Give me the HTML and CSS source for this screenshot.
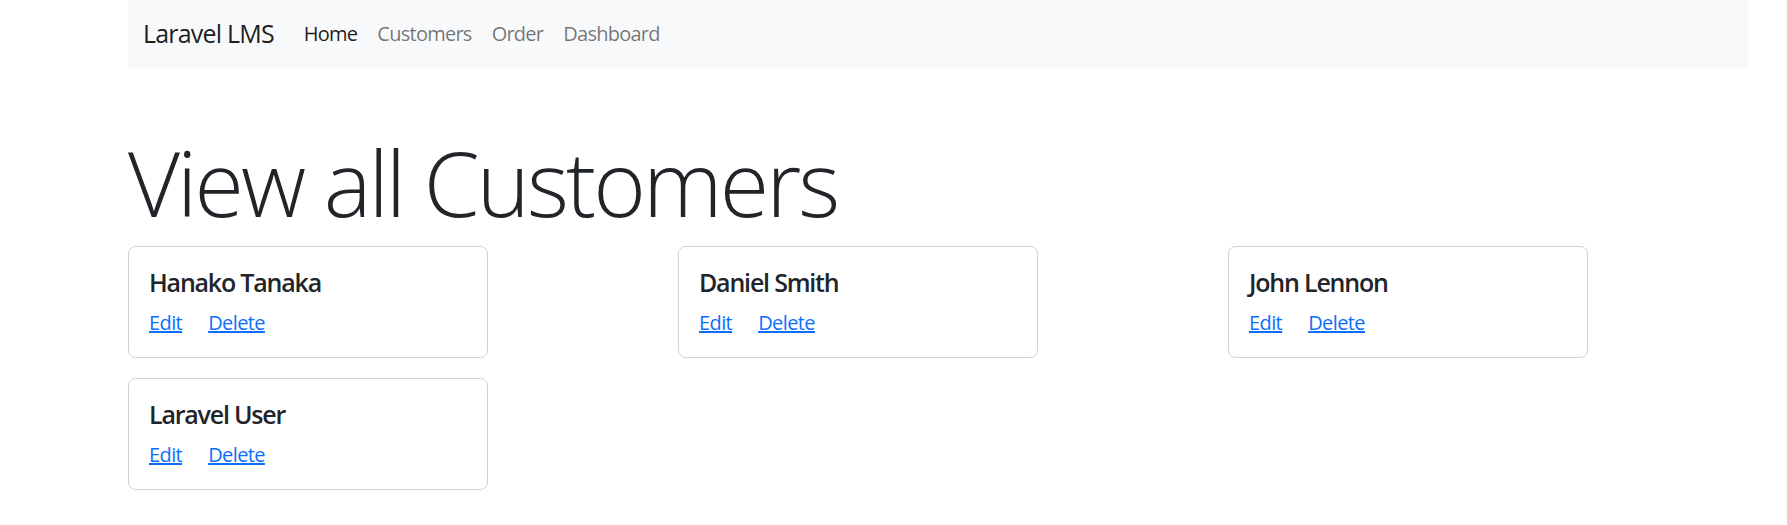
FILE: index.html
```html
<!DOCTYPE html>
<html lang="en">
<head>
<meta charset="utf-8">
<title>Laravel LMS</title>
<link rel="stylesheet" href="styles.css">
</head>
<body>
<div class="container">
  <nav class="navbar">
    <a class="brand" href="#">Laravel LMS</a>
    <ul class="nav">
      <li><a class="nav-link active" href="#">Home</a></li>
      <li><a class="nav-link" href="#">Customers</a></li>
      <li><a class="nav-link" href="#">Order</a></li>
      <li><a class="nav-link" href="#">Dashboard</a></li>
    </ul>
  </nav>
  <main class="main">
    <h1 class="display">View all Customers</h1>
    <div class="grid">
      <div class="card">
        <h5 class="card-title">Hanako Tanaka</h5>
        <div class="links"><a class="card-link" href="#">Edit</a><a class="card-link" href="#">Delete</a></div>
      </div>
      <div class="card">
        <h5 class="card-title">Daniel Smith</h5>
        <div class="links"><a class="card-link" href="#">Edit</a><a class="card-link" href="#">Delete</a></div>
      </div>
      <div class="card">
        <h5 class="card-title">John Lennon</h5>
        <div class="links"><a class="card-link" href="#">Edit</a><a class="card-link" href="#">Delete</a></div>
      </div>
      <div class="card">
        <h5 class="card-title">Laravel User</h5>
        <div class="links"><a class="card-link" href="#">Edit</a><a class="card-link" href="#">Delete</a></div>
      </div>
    </div>
  </main>
</div>
</body>
</html>
```

FILE: styles.css
```css
* { box-sizing: border-box; }
html, body { margin: 0; padding: 0; background: #fff; }
body {
  font-family: "Open Sans", "Noto Sans", "Liberation Sans", sans-serif;
  color: #212529;
  font-size: 20px;
  line-height: 1.5;
}
.container {
  width: 1650px;
  margin-left: 113px;
  padding: 0 15px;
}
.navbar {
  display: flex;
  align-items: center;
  height: 68px;
  padding: 0 15px;
  background: #f8f9fa;
}
.brand {
  font-size: 25px;
  line-height: 37.5px;
  letter-spacing: -0.8px;
  color: rgba(0, 0, 0, 0.9);
  text-decoration: none;
  margin-right: 20px;
}
.nav {
  display: flex;
  list-style: none;
  margin: 0;
  padding: 0;
}
.nav-link {
  display: block;
  padding: 10px 10px;
  font-size: 20px;
  line-height: 30px;
  letter-spacing: -0.75px;
  color: rgba(0, 0, 0, 0.55);
  text-decoration: none;
}
.nav-link.active { color: rgba(0, 0, 0, 0.9); }
.main { padding-top: 60px; }
.display {
  font-size: 90px;
  font-weight: 300;
  line-height: 108px;
  letter-spacing: -2.9px;
  margin: 0 0 10px;
}
.grid {
  display: grid;
  grid-template-columns: repeat(3, 550px);
  row-gap: 20px;
}
.card {
  width: 360px;
  border: 1px solid rgba(0, 0, 0, 0.175);
  border-radius: 7.5px;
  padding: 20px;
}
.card-title {
  font-size: 25px;
  font-weight: 600;
  line-height: 30px;
  letter-spacing: -1.2px;
  margin: 0 0 10px;
}
.links { display: flex; gap: 26px; line-height: 30px; padding-top: 1px; margin-bottom: -1px; }
.card-link {
  color: #0d6efd;
  text-decoration: underline;
  font-size: 20px;
  letter-spacing: -0.6px;
}
```
